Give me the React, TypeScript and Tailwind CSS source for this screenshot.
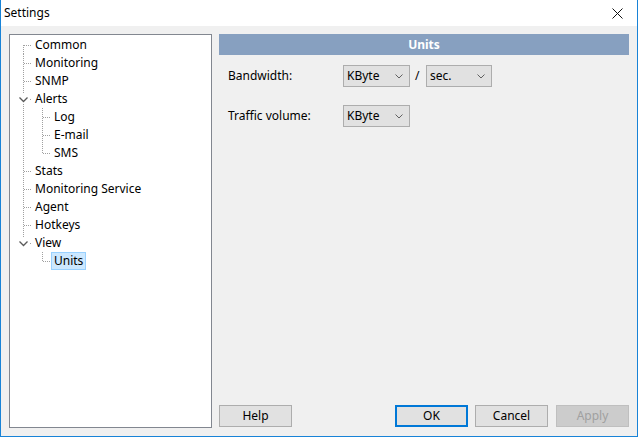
import React from 'react';

type Node = { label: string; level: 0 | 1; kind: 'first' | 'mid' | 'expand' | 'lastExpand' | 'child' | 'lastChild' | 'soloChild'; selected?: boolean };

const nodes: Node[] = [
  { label: 'Common', level: 0, kind: 'first' },
  { label: 'Monitoring', level: 0, kind: 'mid' },
  { label: 'SNMP', level: 0, kind: 'mid' },
  { label: 'Alerts', level: 0, kind: 'expand' },
  { label: 'Log', level: 1, kind: 'child' },
  { label: 'E-mail', level: 1, kind: 'child' },
  { label: 'SMS', level: 1, kind: 'lastChild' },
  { label: 'Stats', level: 0, kind: 'mid' },
  { label: 'Monitoring Service', level: 0, kind: 'mid' },
  { label: 'Agent', level: 0, kind: 'mid' },
  { label: 'Hotkeys', level: 0, kind: 'mid' },
  { label: 'View', level: 0, kind: 'lastExpand' },
  { label: 'Units', level: 1, kind: 'soloChild', selected: true },
];

const dot = { stroke: '#a0a0a0', strokeWidth: 1, strokeDasharray: '1 1', shapeRendering: 'crispEdges' as const };

function Connector({ node }: { node: Node }) {
  const w = node.level === 0 ? 22 : 41;
  const k = node.kind;
  return (
    <svg width={w} height={18} className="shrink-0">
      {node.level === 0 && (
        <>
          {k === 'first' && <line x1={13.5} y1={9} x2={13.5} y2={18} {...dot} />}
          {k === 'mid' && <line x1={13.5} y1={0} x2={13.5} y2={18} {...dot} />}
          {k === 'expand' && (
            <>
              <line x1={13.5} y1={0} x2={13.5} y2={4} {...dot} />
              <line x1={13.5} y1={14} x2={13.5} y2={18} {...dot} />
            </>
          )}
          {k === 'lastExpand' && <line x1={13.5} y1={0} x2={13.5} y2={4} {...dot} />}
          {(k === 'first' || k === 'mid') && <line x1={14} y1={9.5} x2={22} y2={9.5} {...dot} />}
          {(k === 'expand' || k === 'lastExpand') && (
            <>
              <line x1={20} y1={9.5} x2={22} y2={9.5} {...dot} />
              <polyline points="9.5,7.5 13.5,11.5 17.5,7.5" fill="none" stroke="#5a5a5a" strokeWidth={1.3} />
            </>
          )}
        </>
      )}
      {node.level === 1 && (
        <>
          {k !== 'soloChild' && <line x1={13.5} y1={0} x2={13.5} y2={18} {...dot} />}
          {k === 'child' && <line x1={32.5} y1={0} x2={32.5} y2={18} {...dot} />}
          {(k === 'lastChild' || k === 'soloChild') && <line x1={32.5} y1={0} x2={32.5} y2={9} {...dot} />}
          <line x1={33} y1={9.5} x2={41} y2={9.5} {...dot} />
        </>
      )}
    </svg>
  );
}

function Select({ value, width }: { value: string; width: string }) {
  return (
    <div className={`${width} h-[22px] flex items-center justify-between bg-[#e1e1e1] border border-[#adadad] pl-[3px] pr-[6px]`}>
      <span>{value}</span>
      <svg width="8" height="5" viewBox="0 0 8 5">
        <polyline points="0.5,0.5 4,4 7.5,0.5" fill="none" stroke="#606060" strokeWidth="1" />
      </svg>
    </div>
  );
}

function Button({ label, primary, disabled }: { label: string; primary?: boolean; disabled?: boolean }) {
  return (
    <div
      className={`w-[73px] h-[22px] flex items-center justify-center ${
        disabled
          ? 'bg-[#cccccc] border border-[#bfbfbf] text-[#a0a0a0]'
          : primary
          ? 'bg-[#e1e1e1] border-2 border-[#0078d7]'
          : 'bg-[#e1e1e1] border border-[#adadad]'
      }`}
    >
      {label}
    </div>
  );
}

export default function App() {
  return (
    <div
      className="w-[638px] h-[437px] flex flex-col bg-[#f0f0f0] border-x border-b border-[#1883d7] text-[12px] text-black overflow-hidden"
      style={{ fontFamily: '"Segoe UI", "Noto Sans", sans-serif' }}
    >
      <div className="h-[26px] shrink-0 bg-white flex items-center justify-between pl-[3px] pr-[14px]">
        <span>Settings</span>
        <svg width="11" height="11" viewBox="0 0 11 11">
          <line x1="0.5" y1="0.5" x2="10.5" y2="10.5" stroke="#111" strokeWidth="1" />
          <line x1="10.5" y1="0.5" x2="0.5" y2="10.5" stroke="#111" strokeWidth="1" />
        </svg>
      </div>
      <div className="flex-1 flex gap-[7px] pl-[8px] pr-[8px] pt-[8px] pb-[8px]">
        <div className="w-[203px] bg-white border border-[#828790] pt-[1px]">
          {nodes.map((n) => (
            <div key={n.label} className="h-[18px] flex items-center">
              <Connector node={n} />
              <span
                className={`h-[18px] flex items-center px-[2px] border leading-none ${
                  n.selected ? 'bg-[#cce8ff] border-[#99d1ff]' : 'border-transparent'
                }`}
              >
                {n.label}
              </span>
            </div>
          ))}
        </div>
        <div className="flex-1 flex flex-col">
          <div className="h-[21px] bg-[#87a0c0] text-white font-bold flex items-center justify-center">Units</div>
          <div className="flex-1 flex flex-col pl-[9px] pt-[10px] gap-[18px]">
            <div className="flex items-center">
              <span className="w-[115px]">Bandwidth:</span>
              <Select value="KByte" width="w-[67px]" />
              <span className="w-[16px] pl-[5px]">/</span>
              <Select value="sec." width="w-[66px]" />
            </div>
            <div className="flex items-center">
              <span className="w-[115px]">Traffic volume:</span>
              <Select value="KByte" width="w-[67px]" />
            </div>
          </div>
          <div className="flex items-center pb-[1px]">
            <Button label="Help" />
            <div className="flex-1" />
            <div className="flex items-center">
              <Button label="OK" primary />
              <div className="w-[7px]" />
              <Button label="Cancel" />
              <div className="w-[8px]" />
              <Button label="Apply" disabled />
            </div>
          </div>
        </div>
      </div>
    </div>
  );
}
